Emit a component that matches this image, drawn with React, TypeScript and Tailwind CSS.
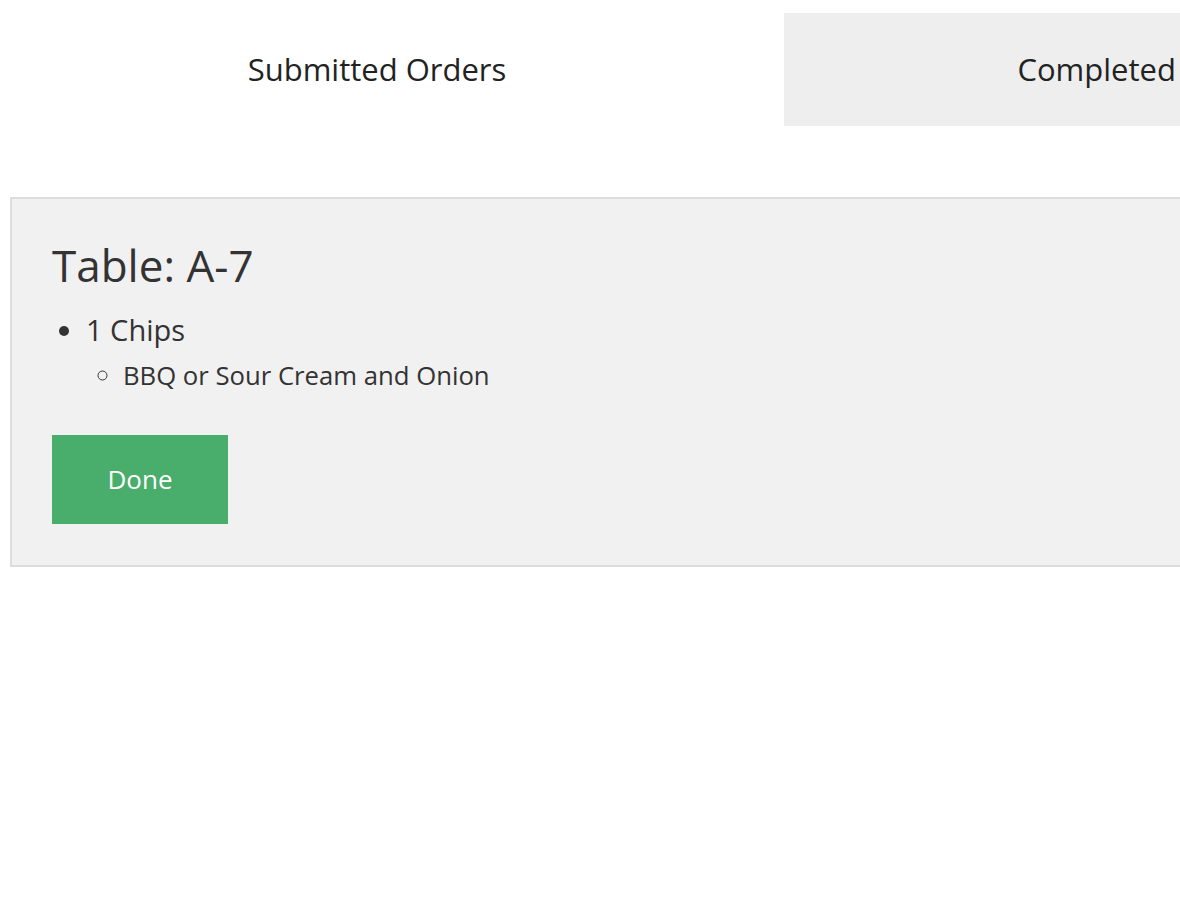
export default function App() {
  return (
    <div className="min-h-screen w-full overflow-hidden bg-white text-[#333] font-['Open_Sans',sans-serif]">
      {/* tabs */}
      <div className="flex w-[1560px] pt-[13px]">
        <div className="ml-[12px] flex h-[113px] w-[730px] items-center justify-center text-[31px] text-[#222]">
          Submitted Orders
        </div>
        <div className="ml-[42px] flex h-[113px] w-[734px] items-center justify-center bg-[#eeeeee] text-[31px] text-[#222]">
          Completed Orders
        </div>
      </div>

      {/* order card */}
      <div className="ml-[10px] mt-[71px] w-[1500px] border-2 border-[#dddddd] bg-[#f1f1f1] px-[40px] pt-[40px] pb-[41px]">
        <h2 className="text-[44px] leading-[1.2] text-[#333]">Table: A-7</h2>
        <ul className="mt-[18px] list-disc pl-[34px] text-[29px] leading-[1.4]">
          <li>
            1 Chips
            <ul className="list-[circle] pl-[37px] text-[25.7px] leading-[2]">
              <li>BBQ or Sour Cream and Onion</li>
            </ul>
          </li>
        </ul>
        <button className="mt-[33px] flex h-[89px] w-[176px] items-center justify-center bg-[#49ad6b] text-[26px] text-white">
          Done
        </button>
      </div>
    </div>
  );
}
